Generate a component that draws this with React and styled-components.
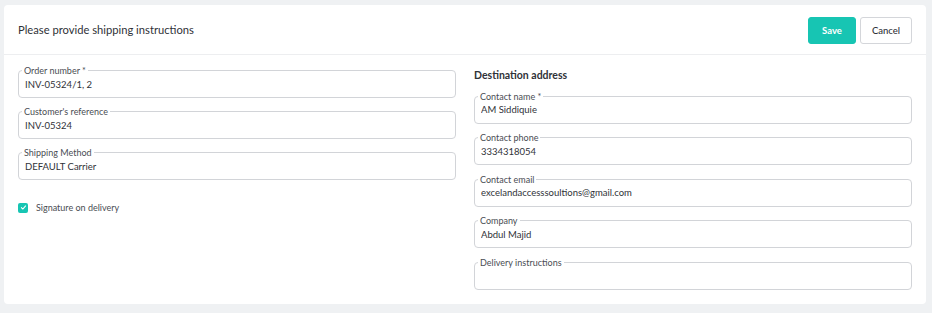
import React, { useState } from 'react';
import styled, { createGlobalStyle } from 'styled-components';

const GlobalStyle = createGlobalStyle`
  html, body {
    margin: 0;
    padding: 0;
    background: #eff1f3;
  }
  body {
    padding: 5px 6px 10px 4px;
    font-family: Lato, 'Noto Sans', sans-serif;
    color: #333;
  }
`;

const Card = styled.div`
  background: #ffffff;
  border-radius: 4px;
  width: 922px;
`;

const Header = styled.div`
  display: flex;
  align-items: center;
  justify-content: space-between;
  height: 50px;
  padding: 0 14px;
  border-bottom: 1px solid #edeef0;
  box-sizing: border-box;
`;

const Title = styled.h1`
  margin: 0;
  font-size: 11.2px;
  font-weight: 400;
  color: #2f3238;
`;

const Actions = styled.div`
  display: flex;
  gap: 4px;
  margin-top: 1px;
`;

const Button = styled.button`
  height: 27px;
  width: ${({ $w }) => $w}px;
  border-radius: 3px;
  font-family: inherit;
  font-size: 9.5px;
  font-weight: ${({ $primary }) => ($primary ? 700 : 500)};
  cursor: pointer;
  border: 1px solid ${({ $primary }) => ($primary ? '#17c5b3' : '#d4d6da')};
  background: ${({ $primary }) => ($primary ? '#17c5b3' : '#ffffff')};
  color: ${({ $primary }) => ($primary ? '#ffffff' : '#2f3238')};
  padding: 0;
`;

const Body = styled.div`
  display: grid;
  grid-template-columns: 438px 438px;
  column-gap: 18px;
  padding: 10px 14px 14px;
`;

const Column = styled.div`
  display: flex;
  flex-direction: column;
  gap: ${({ $gap }) => $gap}px;
`;

const Heading = styled.h2`
  margin: 0 0 1px;
  height: 16px;
  display: flex;
  align-items: flex-end;
  font-size: 10.5px;
  font-weight: 700;
  color: #2f3238;
`;

const Field = styled.fieldset`
  margin: 0;
  padding: 1px 6px 6px;
  border: 1px solid #d2d4d8;
  border-radius: 4px;
  min-width: 0;
`;

const Legend = styled.legend`
  font-size: 9px;
  line-height: 11px;
  color: #4a4d53;
  padding: 0 2px;
  margin-left: -3px;
`;

const Input = styled.input`
  display: block;
  width: 100%;
  box-sizing: border-box;
  border: 0;
  outline: none;
  padding: 0;
  height: 14px;
  font-family: inherit;
  font-size: 9.5px;
  color: #2f3238;
  background: transparent;
`;

const CheckRow = styled.label`
  display: flex;
  align-items: center;
  gap: 8px;
  margin-top: 14px;
  font-size: 9px;
  color: #4a4d53;
  cursor: pointer;
`;

const Box = styled.span`
  width: 10px;
  height: 10px;
  border-radius: 2px;
  background: ${({ $on }) => ($on ? '#17c5b3' : '#ffffff')};
  border: ${({ $on }) => ($on ? 'none' : '1px solid #c8cace')};
  display: flex;
  align-items: center;
  justify-content: center;
`;

const TextField = ({ label, value }) => (
  <Field>
    <Legend>{label}</Legend>
    <Input defaultValue={value} />
  </Field>
);

const left = [
  { label: 'Order number *', value: 'INV-05324/1, 2' },
  { label: "Customer's reference", value: 'INV-05324' },
  { label: 'Shipping Method', value: 'DEFAULT Carrier' },
];

const right = [
  { label: 'Contact name *', value: 'AM Siddiquie' },
  { label: 'Contact phone', value: '3334318054' },
  { label: 'Contact email', value: 'excelandaccesssoultions@gmail.com' },
  { label: 'Company', value: 'Abdul Majid' },
  { label: 'Delivery instructions', value: '' },
];

const App = () => {
  const [signature, setSignature] = useState(true);

  return (
    <>
      <GlobalStyle />
      <Card>
        <Header>
          <Title>Please provide shipping instructions</Title>
          <Actions>
            <Button $primary $w={48}>Save</Button>
            <Button $w={52}>Cancel</Button>
          </Actions>
        </Header>
        <Body>
          <Column $gap={8}>
            {left.map((f) => (
              <TextField key={f.label} {...f} />
            ))}
            <CheckRow onClick={() => setSignature((s) => !s)}>
              <Box $on={signature}>
                {signature && (
                  <svg width="7" height="7" viewBox="0 0 10 10">
                    <path d="M2 5.2l2 2 4-4.4" fill="none" stroke="#fff" strokeWidth="1.5" strokeLinecap="round" strokeLinejoin="round" />
                  </svg>
                )}
              </Box>
              Signature on delivery
            </CheckRow>
          </Column>
          <Column $gap={8.5}>
            <Heading>Destination address</Heading>
            {right.map((f) => (
              <TextField key={f.label} {...f} />
            ))}
          </Column>
        </Body>
      </Card>
    </>
  );
};

export default App;
